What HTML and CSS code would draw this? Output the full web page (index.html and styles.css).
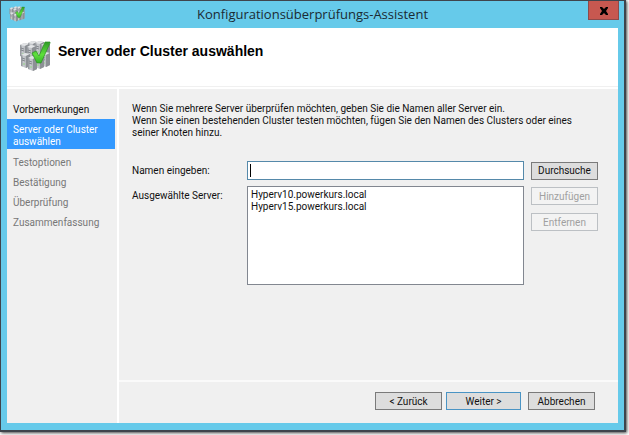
FILE: index.html
```
<!DOCTYPE html>
<html lang="de">
<head>
  <meta charset="UTF-8" />
  <meta name="viewport" content="width=device-width, initial-scale=1.0" />
  <title>Konfigurationsüberprüfungs-Assistent</title>
  <link rel="stylesheet" href="styles.css">
</head>
<body>

  <!-- Cluster icon, used in the title bar and in the header -->
  <svg class="defs" aria-hidden="true">
    <defs>
      <linearGradient id="metal" x1="0" y1="0" x2="1" y2="0">
        <stop offset="0" stop-color="#8d9196" />
        <stop offset="0.3" stop-color="#c9ccd0" />
        <stop offset="0.55" stop-color="#b4b7bb" />
        <stop offset="1" stop-color="#a9acb1" />
      </linearGradient>
      <linearGradient id="green" x1="0" y1="0" x2="0" y2="1">
        <stop offset="0" stop-color="#2f9a27" />
        <stop offset="0.6" stop-color="#5fe03c" />
        <stop offset="1" stop-color="#35b52b" />
      </linearGradient>
      <g id="tower">
        <path d="M0 2 L4 0 L9 1 L9 13 L5 15 L0 13 Z" fill="url(#metal)" />
        <path d="M0 2 L4 0 L9 1 L5 3 Z" fill="#e3e5e7" />
        <path d="M5 3 L9 1 L9 13 L5 15 Z" fill="#8c9095" />
        <path d="M1 5 L4 6 M1 7 L4 8" stroke="#73777d" stroke-width="0.8" />
        <circle cx="3" cy="11" r="0.7" fill="#7fdc6a" />
      </g>
      <symbol id="cluster" viewBox="0 0 32 32">
        <use href="#tower" x="9" y="1" />
        <use href="#tower" x="16" y="1" />
        <use href="#tower" x="22" y="3" />
        <use href="#tower" x="1" y="3" />
        <use href="#tower" x="8" y="5" />
        <use href="#tower" x="22" y="12" />
        <use href="#tower" x="2" y="13" />
        <use href="#tower" x="16" y="14" />
        <use href="#tower" x="9" y="16" />
        <path d="M13 13 L17 11 L20 16 L26 2 L31 2 L31 3 L22 23 L18 23 Z" fill="url(#green)" stroke="#2b8f22" stroke-width="0.7" />
      </symbol>
    </defs>
  </svg>

  <div class="window">
    <div class="titlebar">
      <svg class="app-icon" aria-hidden="true"><use href="#cluster" /></svg>
      <span class="title">Konfigurationsüberprüfungs-Assistent</span>
      <button class="close" aria-label="Schließen">
        <svg viewBox="0 0 10 8" aria-hidden="true"><path d="M1 0h2l2 2 2-2h2v1L7 4l2 3v1H7L5 6 3 8H1V7l2-3-2-3z" /></svg>
      </button>
    </div>

    <div class="client">
      <header class="header">
        <svg class="header-icon" aria-hidden="true"><use href="#cluster" /></svg>
        <h1>Server oder Cluster auswählen</h1>
      </header>

      <div class="content">
        <nav class="steps">
          <div class="step done">Vorbemerkungen</div>
          <div class="step active">Server oder Cluster auswählen</div>
          <div class="step">Testoptionen</div>
          <div class="step">Bestätigung</div>
          <div class="step">Überprüfung</div>
          <div class="step">Zusammenfassung</div>
        </nav>

        <main class="page">
          <p>Wenn Sie mehrere Server überprüfen möchten, geben Sie die Namen aller Server ein.<br>Wenn Sie einen bestehenden Cluster testen möchten, fügen Sie den Namen des Clusters oder eines seiner Knoten hinzu.</p>

          <div class="form">
            <label for="name">Namen eingeben:</label>
            <input type="text" id="name" />
            <button>Durchsuche</button>

            <label class="list-label" for="servers">Ausgewählte Server:</label>
            <select id="servers" size="7">
              <option>Hyperv10.powerkurs.local</option>
              <option>Hyperv15.powerkurs.local</option>
            </select>
            <div class="list-buttons">
              <button disabled>Hinzufügen</button>
              <button disabled>Entfernen</button>
            </div>
          </div>

          <footer class="footer">
            <button>&lt; Zurück</button>
            <button class="next">Weiter &gt;</button>
            <button class="cancel">Abbrechen</button>
          </footer>
        </main>
      </div>
    </div>
  </div>

</body>
</html>
```
FILE: styles.css
```
* {
  box-sizing: border-box;
}

body {
  margin: 0;
  padding: 0 3px 3px 0;
  min-height: 100vh;
  display: flex;
  background: #fff;
  color: #111;
  font-family: Roboto, Arial, sans-serif;
  font-size: 10px;
  line-height: 12px;
}

.defs {
  position: absolute;
  width: 0;
  height: 0;
}

.window {
  flex: 1;
  display: flex;
  flex-direction: column;
  padding: 0 6px 7px;
  background: #66caea;
  border: 1px solid #3f444c;
  border-width: 1px 2px 2px 1px;
  box-shadow: 1px 1px 3px #444;
}

/* Title bar */
.titlebar {
  display: flex;
  align-items: flex-start;
  height: 27px;
}

.app-icon {
  width: 16px;
  height: 16px;
  margin: 5px 0 0 2px;
}

.title {
  flex: 1;
  padding-left: 12px;
  text-align: center;
  font-family: "Open Sans", "Segoe UI", sans-serif;
  font-size: 13px;
  line-height: 27px;
  color: #1b2b33;
}

button {
  height: 18px;
  padding: 1px 0 0;
  background: #ddd;
  border: 1px solid #7a7a7a;
  color: #111;
  font: inherit;
}

button:disabled {
  background: #f3f3f3;
  border-color: #bcc0c4;
  color: #a0a0a0;
}

.close {
  width: 31px;
  height: 19px;
  margin-right: -1px;
  background: #c75850;
  border-color: #8d4a4a;
  border-top: 0;
}

.close svg {
  display: block;
  width: 10px;
  height: 8px;
  margin: 0 auto;
}

/* Client area */
.client {
  flex: 1;
  display: flex;
  flex-direction: column;
  background: #f0f0f0;
}

.header {
  display: flex;
  align-items: flex-start;
  gap: 7px;
  height: 61px;
  padding: 12px 12px 0;
  background: linear-gradient(#fff 58px, #f0f0f0 58px, #f0f0f0 59px, #fff 59px);
}

.header-icon {
  width: 32px;
  height: 32px;
}

h1 {
  margin: 3px 0 0;
  font-family: "Liberation Sans", Arial, sans-serif;
  font-size: 14px;
  line-height: 16px;
  color: #000;
}

.content {
  flex: 1;
  display: flex;
}

/* Wizard steps */
.steps {
  width: 112px;
  padding-top: 10px;
  border-right: 2px solid #fff;
}

.step {
  margin-right: 2px;
  padding: 5px 6px 3px;
  color: #777;
}

.step.done {
  color: #111;
}

.step.active {
  margin-bottom: 3px;
  padding-bottom: 1px;
  background: #3399ff;
  color: #fff;
}

.page {
  flex: 1;
  display: flex;
  flex-direction: column;
}

p {
  margin: 14px 20px 22px 13px;
}

.form {
  display: grid;
  grid-template-columns: 108px 1fr 67px;
  gap: 6px 7px;
  margin: 0 20px 0 13px;
  align-items: center;
}

.list-label,
.list-buttons {
  align-self: start;
}

.list-label {
  padding-top: 4px;
}

input {
  width: 100%;
  height: 19px;
  padding: 0 3px;
  border: 1px solid #5589aa;
  /* text cursor */
  background: linear-gradient(#000, #000) 2px 2px / 1px 13px no-repeat #fff;
  font: inherit;
}

select {
  width: 100%;
  height: 99px;
  padding: 2px 0;
  background: #fff;
  border: 1px solid #828790;
  border-radius: 0;
  color: #111;
  font: inherit;
  overflow: hidden;
}

option {
  min-height: 12px;
  padding: 0 3px;
}

.list-buttons {
  display: grid;
  gap: 8px;
  padding-top: 1px;
}

/* Navigation buttons */
.footer {
  display: flex;
  justify-content: flex-end;
  gap: 4px;
  margin-top: auto;
  padding: 10px 23px 13px;
  border-top: 2px solid #fafafa;
}

.footer button {
  width: 67px;
}

.footer .next {
  width: 75px;
  border-color: #4a94c4;
}

.footer .cancel {
  margin-left: 3px;
}
```
